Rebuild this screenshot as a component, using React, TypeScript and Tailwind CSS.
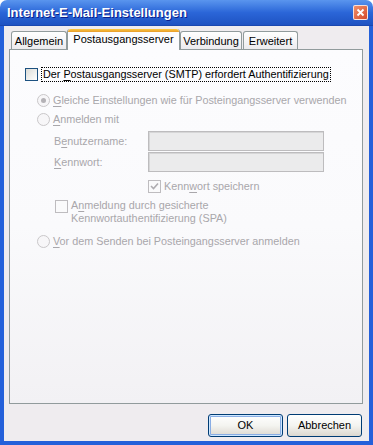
import type { ReactNode } from "react";

const FONT = "font-['Tahoma','Liberation_Sans',sans-serif]";
const DIS = "text-[#A9A7AB]";

function Radio({ checked }: { checked?: boolean }) {
  return (
    <span className="w-[13px] h-[13px] shrink-0 rounded-full border border-[#C9C7C9] bg-[#F7F6F8] flex items-center justify-center">
      {checked && <span className="w-[5px] h-[5px] rounded-full bg-[#B4B2B6]" />}
    </span>
  );
}

function CheckBox({ checked, enabled }: { checked?: boolean; enabled?: boolean }) {
  return (
    <span
      className={`w-[13px] h-[13px] shrink-0 border flex items-center justify-center ${
        enabled
          ? "border-[#1C5180] bg-linear-to-br from-[#DCDCD7] to-white"
          : "border-[#BEBCBF] bg-[#FAFAFB]"
      }`}
    >
      {checked && (
        <svg width="9" height="9" viewBox="0 0 9 9">
          <path d="M1 4 L3.5 6.5 L8 1.5" fill="none" stroke="#AEACB0" strokeWidth="1.6" />
        </svg>
      )}
    </span>
  );
}

function Mn({ children }: { children: ReactNode }) {
  return <span className="underline underline-offset-[2px]">{children}</span>;
}

function Tab({ label, width, active }: { label: string; width: number; active?: boolean }) {
  if (active) {
    return (
      <div
        className="relative z-10 h-[21px] -mb-px bg-[#FCFCFE] border-x border-[#919B9C] rounded-t-[3px] flex flex-col"
        style={{ width }}
      >
        <div className="h-[3px] rounded-t-[3px] bg-linear-to-b from-[#FFC83C] to-[#E69C2C]" />
        <div className="flex-1 flex items-start justify-center pt-[1px] text-black text-[11px] leading-[13px]">
          {label}
        </div>
      </div>
    );
  }
  return (
    <div
      className="h-[18px] border-x border-t border-[#919B9C] rounded-t-[3px] bg-linear-to-b from-white to-[#ECEBEE] flex items-center justify-center pt-[2px] text-black text-[11px] leading-[13px]"
      style={{ width }}
    >
      {label}
    </div>
  );
}

function XpButton({ label, isDefault }: { label: string; isDefault?: boolean }) {
  return (
    <div
      className={`w-[75px] h-[23px] rounded-[3px] border border-[#003C74] bg-linear-to-b from-white via-[#F4F4F0] to-[#DCD8D0] flex items-center justify-center text-black text-[11px] ${
        isDefault ? "shadow-[inset_0_0_0_1px_#CEE7FF,inset_0_0_0_2px_#89ADE4]" : ""
      }`}
    >
      {label}
    </div>
  );
}

export default function App() {
  return (
    <div className={`w-[373px] h-[445px] flex flex-col ${FONT} select-none`}>
      <div className="h-[26px] shrink-0 rounded-t-[7px] bg-linear-to-b from-[#5A95EE] via-[#2B66D8] to-[#1E52C2] border-b border-[#1A47B0] flex items-center pl-[7px] pr-[5px]">
        <div className="flex-1 text-white text-[13px] font-bold font-['Liberation_Sans',sans-serif] [text-shadow:1px_1px_0_#0A1E8C]">
          Internet-E-Mail-Einstellungen
        </div>
        <div className="w-[15px] h-[15px] rounded-[2px] border border-white/80 bg-linear-to-br from-[#F0906A] to-[#D4482A] flex items-center justify-center">
          <svg width="9" height="9" viewBox="0 0 9 9">
            <path d="M1.5 1.5 L7.5 7.5 M7.5 1.5 L1.5 7.5" stroke="white" strokeWidth="1.8" />
          </svg>
        </div>
      </div>

      <div className="flex-1 flex flex-col bg-[#EFECEF] border-x-4 border-b-4 border-[#2460DA] pt-[3px] pl-[5px] pr-[6px]">
        <div className="h-[20px] flex items-end pl-[2px]">
          <Tab label="Allgemein" width={56} />
          <Tab label="Postausgangsserver" width={113} active />
          <Tab label="Verbindung" width={62} />
          <div className="w-[1px]" />
          <Tab label="Erweitert" width={55} />
        </div>

        <div className="h-[355px] border border-[#919B9C] bg-linear-to-b from-[#FCFCFE] via-[#FAFAFC] to-[#F2F1F4] flex flex-col text-[10.8px] leading-[13px]">
          <div className="mt-[17px] h-[15px] pl-[15px] flex items-center gap-[3px]">
            <CheckBox enabled />
            <span className="border border-dotted border-black px-px text-black">
              Der <Mn>P</Mn>ostausgangsserver (SMTP) erfordert Authentifizierung
            </span>
          </div>

          <div className={`mt-[11px] h-[15px] pl-[27px] flex items-center gap-[3px] ${DIS}`}>
            <Radio checked />
            <span>
              <Mn>G</Mn>leiche Einstellungen wie für Posteingangsserver verwenden
            </span>
          </div>

          <div className={`mt-[4px] h-[15px] pl-[27px] flex items-center gap-[3px] ${DIS}`}>
            <Radio />
            <span>
              <Mn>A</Mn>nmelden mit
            </span>
          </div>

          <div className={`mt-[4px] h-[20px] pl-[44px] flex items-center ${DIS}`}>
            <span className="w-[94px]">
              B<Mn>e</Mn>nutzername:
            </span>
            <div className="w-[176px] h-[20px] border border-[#BDBCBE] bg-[#EBEBEC] shadow-[inset_1px_1px_0_#D6D6D7]" />
          </div>

          <div className={`mt-[1px] h-[20px] pl-[44px] flex items-center ${DIS}`}>
            <span className="w-[94px]">
              <Mn>K</Mn>ennwort:
            </span>
            <div className="w-[176px] h-[20px] border border-[#BDBCBE] bg-[#EBEBEC] shadow-[inset_1px_1px_0_#D6D6D7]" />
          </div>

          <div className={`mt-[7px] h-[15px] pl-[138px] flex items-center gap-[3px] ${DIS}`}>
            <CheckBox checked />
            <span>
              Kenn<Mn>w</Mn>ort speichern
            </span>
          </div>

          <div className={`mt-[5px] pl-[45px] flex items-start gap-[3px] ${DIS}`}>
            <div className="mt-[1px]">
              <CheckBox />
            </div>
            <div className="flex flex-col">
              <span>
                A<Mn>n</Mn>meldung durch gesicherte
              </span>
              <span>Kennwortauthentifizierung (SPA)</span>
            </div>
          </div>

          <div className={`mt-[9px] h-[15px] pl-[27px] flex items-center gap-[3px] ${DIS}`}>
            <Radio />
            <span>
              <Mn>V</Mn>or dem Senden bei Posteingangsserver anmelden
            </span>
          </div>
        </div>

        <div className="mt-[10px] flex justify-end gap-[4px] pr-px">
          <XpButton label="OK" isDefault />
          <XpButton label="Abbrechen" />
        </div>
      </div>
    </div>
  );
}
